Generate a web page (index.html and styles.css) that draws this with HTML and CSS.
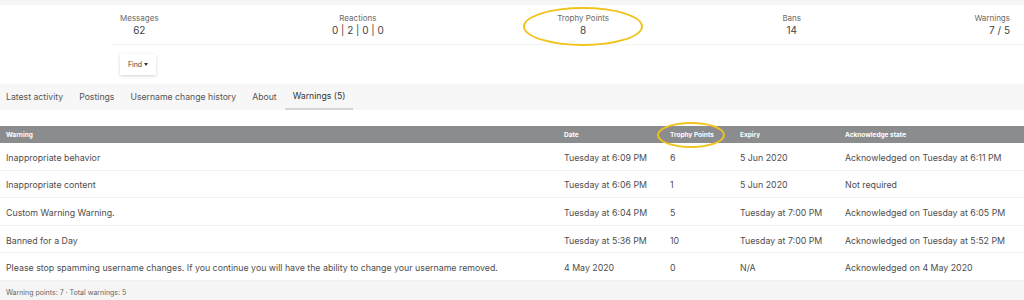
FILE: index.html
```html
<!DOCTYPE html>
<html>
<head>
<meta charset="utf-8">
<link rel="stylesheet" href="styles.css">
</head>
<body>
<div class="page">
  <div class="topstrip"></div>
  <div class="profile">
    <div class="stats">
      <div class="stat"><div class="label">Messages</div><div class="value">62</div></div>
      <div class="stat"><div class="label">Reactions</div><div class="value">0 | 2 | 0 | 0</div></div>
      <div class="stat"><div class="label">Trophy Points</div><div class="value">8</div><span class="ring ring-stat"></span></div>
      <div class="stat"><div class="label">Bans</div><div class="value">14</div></div>
      <div class="stat stat-right"><div class="label">Warnings</div><div class="value">7 / 5</div></div>
    </div>
    <div class="actions">
      <button class="find">Find <span class="caret"></span></button>
    </div>
  </div>
  <nav class="tabs">
    <span class="tab">Latest activity</span>
    <span class="tab">Postings</span>
    <span class="tab">Username change history</span>
    <span class="tab">About</span>
    <span class="tab active">Warnings (5)</span>
  </nav>
  <div class="table">
    <div class="row head">
      <div>Warning</div><div>Date</div><div class="tp">Trophy Points<span class="ring ring-head"></span></div><div>Expiry</div><div>Acknowledge state</div>
    </div>
    <div class="row">
      <div>Inappropriate behavior</div><div>Tuesday at 6:09 PM</div><div>6</div><div>5 Jun 2020</div><div>Acknowledged on Tuesday at 6:11 PM</div>
    </div>
    <div class="row">
      <div>Inappropriate content</div><div>Tuesday at 6:06 PM</div><div>1</div><div>5 Jun 2020</div><div>Not required</div>
    </div>
    <div class="row">
      <div>Custom Warning Warning.</div><div>Tuesday at 6:04 PM</div><div>5</div><div>Tuesday at 7:00 PM</div><div>Acknowledged on Tuesday at 6:05 PM</div>
    </div>
    <div class="row">
      <div>Banned for a Day</div><div>Tuesday at 5:36 PM</div><div>10</div><div>Tuesday at 7:00 PM</div><div>Acknowledged on Tuesday at 5:52 PM</div>
    </div>
    <div class="row">
      <div>Please stop spamming username changes. If you continue you will have the ability to change your username removed.</div><div>4 May 2020</div><div>0</div><div>N/A</div><div>Acknowledged on 4 May 2020</div>
    </div>
    <div class="footer">Warning points: 7 · Total warnings: 5</div>
  </div>
</div>
</body>
</html>
```

FILE: styles.css
```css
* { box-sizing: border-box; }
html, body { margin: 0; padding: 0; background: #fff; }
body {
  font-family: "Inter", "DejaVu Sans", sans-serif;
  color: #505050;
  width: 1024px;
  height: 300px;
  overflow: hidden;
}
.topstrip {
  height: 5px;
  background: #f6f6f6;
}
.profile {
  margin-left: 113px;
  height: 79px;
}
.stats {
  display: flex;
  justify-content: space-between;
  padding: 7px 14px 0 7px;
  height: 40px;
  border-bottom: 1px solid #f3f3f3;
}
.stat {
  position: relative;
  text-align: center;
}
.stat-right { text-align: right; }
.label {
  font-size: 8px;
  line-height: 12px;
  color: #6a6a6a;
}
.value {
  font-size: 10px;
  line-height: 13px;
  color: #444;
}
.ring {
  position: absolute;
  border: 2.5px solid #f2c31b;
  border-radius: 50%;
  pointer-events: none;
}
.ring-stat {
  left: 50%;
  top: 50%;
  width: 120px;
  height: 39px;
  margin-left: -60px;
  margin-top: -21px;
}
.actions {
  padding: 9px 0 0 7px;
}
.find {
  font-family: inherit;
  font-size: 7px;
  color: #444;
  background: #fff;
  border: none;
  width: 36px;
  height: 21px;
  padding: 0;
  box-shadow: 0 1px 3px rgba(0,0,0,0.18);
  display: flex;
  align-items: center;
  justify-content: center;
  gap: 2px;
}
.caret {
  width: 0;
  height: 0;
  border-left: 2.5px solid transparent;
  border-right: 2.5px solid transparent;
  border-top: 3px solid #333;
}
.tabs {
  display: flex;
  height: 26px;
  background: #f7f7f7;
  padding-left: 6px;
  gap: 16px;
  align-items: stretch;
}
.tab {
  font-size: 8.7px;
  color: #555;
  display: flex;
  align-items: center;
  padding-bottom: 1px;
}
.tab.active {
  color: #333;
  padding: 0 8px 1px;
  margin-left: -8px;
  border-bottom: 2px solid #d5d5d5;
}
.table {
  margin-top: 16px;
}
.row {
  display: grid;
  grid-template-columns: 558px 106px 70px 105px 1fr;
  padding-left: 6px;
  padding-top: 2px;
  height: 27.6px;
  align-items: center;
  font-size: 8.8px;
  color: #4e4e4e;
  border-bottom: 1px solid #f0f0f0;
}
.row.head {
  height: 17px;
  padding-top: 0;
  background: #8b8c8e;
  color: #fff;
  font-size: 6.5px;
  font-weight: 700;
  border-bottom: none;
}
.tp { position: relative; }
.ring-head {
  left: -13px;
  top: 50%;
  width: 68px;
  height: 26px;
  margin-top: -13px;
}
.footer {
  height: 20px;
  background: #f5f5f5;
  font-size: 7px;
  color: #666;
  padding-left: 6px;
  padding-top: 4px;
  display: flex;
  align-items: center;
}
```
